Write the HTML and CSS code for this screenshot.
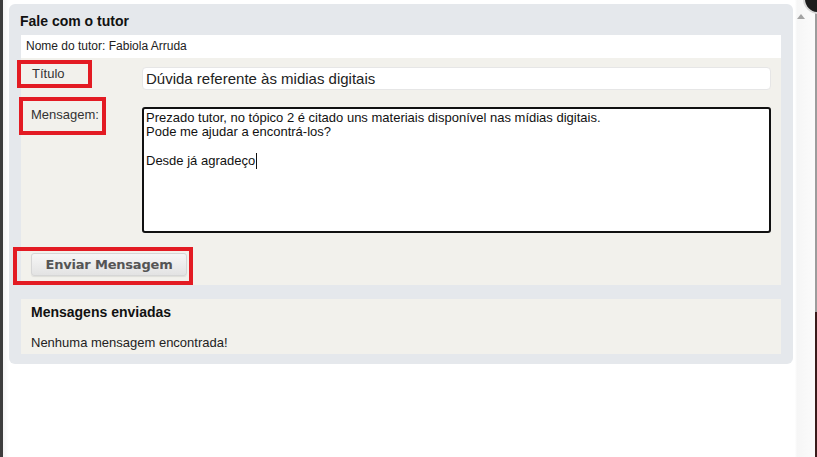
FILE: index.html
```html
<!DOCTYPE html>
<html lang="pt-BR">
<head>
  <meta charset="UTF-8">
  <title>Fale com o tutor</title>
  <link rel="stylesheet" href="styles.css">
</head>
<body>
  <div class="window">
    <div class="content">
      <div class="panel">
        <h2 class="panel-title">Fale com o tutor</h2>
        <div class="tutor-name">Nome do tutor: Fabiola Arruda</div>

        <div class="form">
          <div class="form-grid">
            <label class="field-label label-title">Título</label>
            <div class="input">Dúvida referente às midias digitais</div>

            <label class="field-label">Mensagem:</label>
            <div class="textarea">Prezado tutor, no tópico 2 é citado uns materiais disponível nas mídias digitais.<br>Pode me ajudar a encontrá-los?<br><br>Desde já agradeço<span class="caret"></span></div>
          </div>

          <div class="actions">
            <button class="send-btn">Enviar Mensagem</button>
          </div>

          <!-- marcações em vermelho -->
          <span class="mark mark-title"></span>
          <span class="mark mark-message"></span>
          <span class="mark mark-button"></span>
        </div>

        <div class="sent-box">
          <h3>Mensagens enviadas</h3>
          <p>Nenhuma mensagem encontrada!</p>
        </div>
      </div>
    </div>

    <div class="scrollbar">
      <span class="arrow-up"></span>
    </div>
  </div>

  <div class="close-btn"></div>
</body>
</html>
```

FILE: styles.css
```css
* {
  margin: 0;
  padding: 0;
  box-sizing: border-box;
}

body {
  font-family: 'Liberation Sans', Arial, sans-serif;
  background-color: #fff;
  color: #222;
  width: 817px;
  height: 457px;
  overflow: hidden;
  border-left: 3px solid #3d3d3d;
  position: relative;
}

.window {
  display: flex;
  height: 100%;
}

.content {
  flex: 1;
  padding: 4px 0 0 6px;
  background: linear-gradient(to right, #f4f4f4, #fff 6px);
}

.panel {
  width: 784px;
  background-color: #e5e8ec;
  border-radius: 6px;
  padding: 9px 12px 10px 12px;
}

.panel-title {
  font-size: 14px;
  line-height: 16px;
  font-weight: bold;
  color: #111;
  margin-left: -1px;
}

.tutor-name {
  margin-top: 6px;
  height: 23px;
  line-height: 23px;
  background-color: #fff;
  font-size: 12px;
  color: #222;
  padding-left: 5px;
}

.form {
  position: relative;
  background-color: #f2f1ec;
  padding: 9px 10px 9px 0;
}

.form-grid {
  display: grid;
  grid-template-columns: 121px 1fr;
  row-gap: 17px;
  align-items: start;
}

.field-label {
  font-size: 13px;
  line-height: 15px;
  color: #333;
  padding-left: 10px;
}

.label-title {
  margin-top: -1px;
  padding-left: 11px;
}

.input {
  height: 23px;
  line-height: 21px;
  background-color: #fff;
  border: 1px solid #e6e6e6;
  border-radius: 4px;
  padding-left: 3px;
  font-size: 15px;
  color: #222;
}

.textarea {
  height: 126px;
  background-color: #fff;
  border: 2px solid #111;
  border-radius: 3px;
  padding: 2px 2px;
  font-size: 13px;
  line-height: 14px;
  color: #111;
}

.caret {
  display: inline-block;
  width: 1px;
  height: 16px;
  margin-left: 1px;
  background-color: #111;
  vertical-align: -4px;
}

.actions {
  margin-top: 20px;
  padding-left: 10px;
}

.send-btn {
  width: 156px;
  height: 23px;
  font-family: 'DejaVu Sans', Verdana, sans-serif;
  font-size: 13px;
  font-weight: bold;
  letter-spacing: -0.2px;
  color: #555;
  background: linear-gradient(#f6f6f6, #e3e3e3);
  border: 1px solid #d6d6d6;
  border-radius: 3px;
  box-shadow: 0 1px 1px rgba(0,0,0,0.08);
}

.mark {
  position: absolute;
  border: 4px solid #e31b23;
}

.mark-title {
  left: -4px;
  top: 2px;
  width: 75px;
  height: 28px;
}

.mark-message {
  left: -2px;
  top: 39px;
  width: 87px;
  height: 38px;
}

.mark-button {
  left: -8px;
  top: 189px;
  width: 180px;
  height: 38px;
}

.sent-box {
  margin-top: 14px;
  height: 55px;
  background-color: #f2f1ec;
  padding: 4px 10px 0 10px;
}

.sent-box h3 {
  font-size: 14px;
  line-height: 18px;
  font-weight: bold;
  color: #111;
}

.sent-box p {
  margin-top: 14px;
  font-size: 13px;
  line-height: 16px;
  color: #222;
}

.scrollbar {
  width: 24px;
  background: linear-gradient(to right, #fff 2px, #f6f6f6 4px, #fbfbfb);
  border-right: 2px solid #3a2525;
  border-image: linear-gradient(#9c9c9c 312px, #3a1c1c 312px) 1;
  position: relative;
}

.arrow-up {
  position: absolute;
  left: 4px;
  top: 14px;
  width: 0;
  height: 0;
  border-left: 4px solid transparent;
  border-right: 4px solid transparent;
  border-bottom: 5px solid #a3a3a3;
}

.close-btn {
  position: absolute;
  right: -16px;
  top: -16px;
  width: 30px;
  height: 30px;
  border-radius: 50%;
  background-color: #1c1c1c;
  border: 2px solid #d8d8d8;
}
```
